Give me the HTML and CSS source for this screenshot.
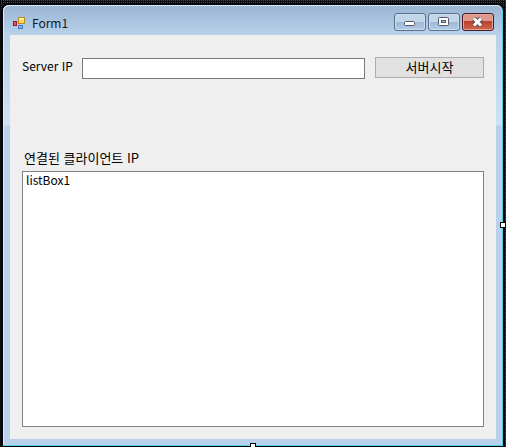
FILE: index.html
```
<!DOCTYPE html>
<html lang="ko">
<head>
    <meta charset="utf-8">
    <title>Form1</title>
    <link rel="stylesheet" href="styles.css">
</head>
<body>
<div class="window">
    <div class="titlebar">
        <svg class="titlebar_icon" width="14" height="14" viewBox="0 0 14 14">
            <rect x="5.5" y="1.5" width="6" height="6" fill="#ffd94a" stroke="#b8892b"/>
            <path d="M6 2h5v2H6z" fill="#fff2a0"/>
            <rect x="0.5" y="5.500" width="3" height="4" fill="#e0575a" stroke="#a01d24"/>
            <rect x="5.5" y="9.5" width="4" height="3" fill="#8fb5f2" stroke="#4a74c4"/>
        </svg>
        <h1 class="titlebar_text">Form1</h1>
        <div class="controls">
            <button class="control" aria-label="최소화">
                <svg width="14" height="14" viewBox="0 0 14 14">
                    <rect x="1.5" y="6.5" width="10" height="4" rx="1" fill="#fff" stroke="#535666"/>
                </svg>
            </button>
            <button class="control" aria-label="최대화">
                <svg width="14" height="14" viewBox="0 0 14 14">
                    <rect x="1.5" y="2.5" width="10" height="8" rx="1" fill="#fff" stroke="#535666"/>
                    <rect x="4.5" y="5.5" width="4" height="2" fill="#a9c1dc" stroke="#535666"/>
                </svg>
            </button>
            <button class="control control-close" aria-label="닫기">
                <svg width="14" height="14" viewBox="0 0 14 14">
                    <path d="M3 3.500l7 7M10 3.500l-7 7" stroke="#535666" stroke-width="5"/>
                    <path d="M3 3.500l7 7M10 3.500l-7 7" stroke="#fff" stroke-width="3"/>
                </svg>
            </button>
        </div>
    </div>
    <div class="client">
        <div class="server">
            <label for="serverIp" class="label">Server IP</label>
            <input id="serverIp" class="input" type="text">
            <button class="button">서버시작</button>
        </div>
        <label for="clientList" class="label label-list">연결된 클라이언트 IP</label>
        <select id="clientList" class="list" size="10">
            <option class="list_item">listBox1</option>
        </select>
    </div>
    <span class="handle handle-right"></span>
    <span class="handle handle-bottom"></span>
</div>
</body>
</html>
```

FILE: styles.css
```
* {
    box-sizing: border-box;
}

body {
    margin: 0;
    height: 100vh;
    padding: 5px 3px 1px;
    display: flex;
    background: #0b0b0d conic-gradient(#4a4a4e 25%, transparent 0) 0 0 / 2px 2px;
    font-family: "Noto Sans CJK KR", sans-serif;
    font-size: 12px;
    line-height: 14px;
    color: #000;
}

.window {
    position: relative;
    flex-grow: 1;
    display: flex;
    flex-direction: column;
    padding: 0 6px 6px 7px;
    background: linear-gradient(#9ab5d3, #b9d1ea 30px, #cfe1f4 120px, #b9d1ea 121px);
    border-radius: 6px 6px 0 0;
    border-right: 1px solid #4fd0e0;
    border-bottom: 1px solid #4fd0e0;
    box-shadow: 0 0 0 2px #05070c, inset 0 1px #dfeaf5, inset 1px 0 #dfeaf5;
}

.titlebar {
    display: flex;
    align-items: center;
    height: 30px;
    padding-left: 3px;
    padding-top: 6px;
}

.titlebar_icon {
    flex-shrink: 0;
}

.titlebar_text {
    flex-grow: 1;
    margin: 0 0 0 5px;
    font-size: 12px;
    font-weight: normal;
    color: #10182a;
}

.controls {
    display: flex;
    gap: 2px;
    align-self: flex-start;
    margin: 2px 2px 0 0;
}

.control {
    display: flex;
    align-items: center;
    justify-content: center;
    width: 32px;
    height: 18px;
    padding: 0;
    border: 1px solid #56708f;
    border-radius: 3px;
    background: linear-gradient(#c3d5e9 50%, #9db7d5 50%, #b3cbe5);
    box-shadow: inset 0 0 0 1px #d0deec;
}

.control-close {
    border-color: #4b1820;
    background: linear-gradient(#dd9a8b 45%, #b8402f 45%, #d0674a);
    box-shadow: inset 0 0 0 1px #e0a69a;
}

.client {
    flex-grow: 1;
    display: flex;
    flex-direction: column;
    padding: 22px 12px 12px;
    background: #efefef;
}

.server {
    display: flex;
    align-items: flex-start;
}

.server .label {
    width: 60px;
    padding-top: 2px;
}

.label {
    white-space: nowrap;
}

.input {
    flex-grow: 1;
    min-width: 0;
    height: 21px;
    margin-top: 1px;
    padding: 2px;
    border: 1px solid #7a7a7a;
    background: #fff;
    font: inherit;
}

.button {
    width: 109px;
    height: 21px;
    margin-left: 10px;
    padding: 0 0 2px;
    border: 1px solid #adadad;
    background: #e1e1e1;
    font: inherit;
    font-size: 13px;
    color: #000;
}

.label-list {
    margin: 72px 0 6px 2px;
    font-size: 13px;
}

.list {
    flex-grow: 1;
    width: 100%;
    padding: 0;
    border: 1px solid #828282;
    border-radius: 0;
    outline: none;
    overflow: hidden;
    background: #fff;
    font: inherit;
    line-height: 14px;
    color: #000;
}

.list_item {
    display: flex;
    align-items: center;
    height: 14px;
    min-height: 0;
    padding: 0 3px;
}

.handle {
    position: absolute;
    width: 6px;
    height: 6px;
    margin: auto;
    border: 1px solid #000;
    background: #fff;
}

.handle-right {
    right: -4px;
    top: 0;
    bottom: 0;
}

.handle-bottom {
    bottom: -4px;
    left: 0;
    right: 0;
}
```
